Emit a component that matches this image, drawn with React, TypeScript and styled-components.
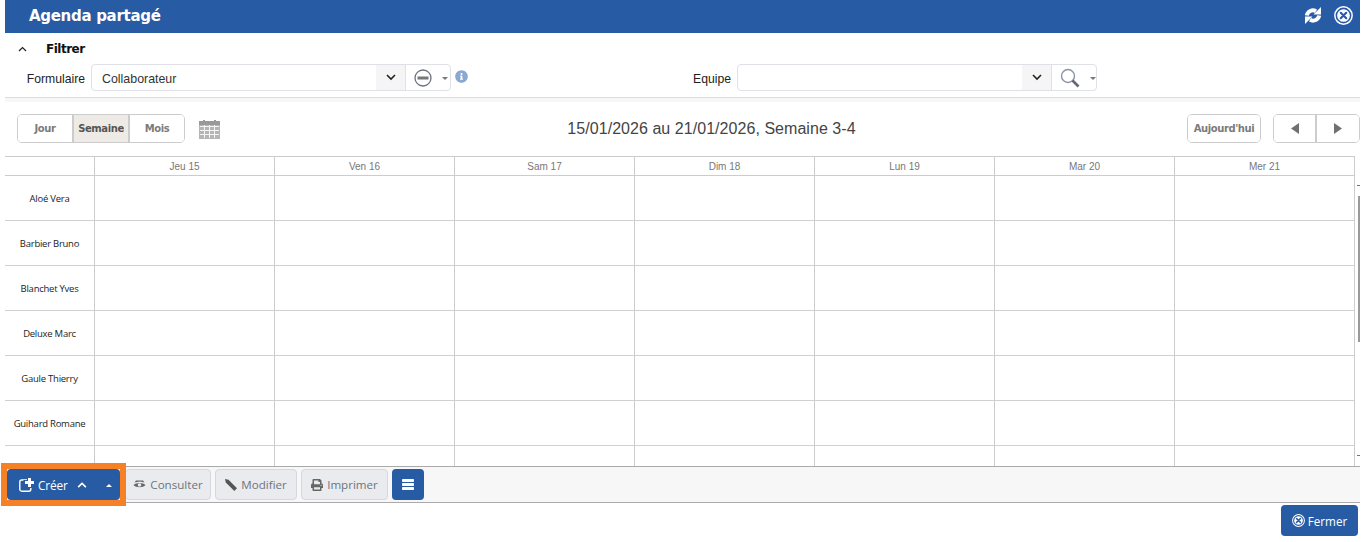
import * as React from 'react';
import styled, { createGlobalStyle } from 'styled-components';
import { FaChevronUp, FaInfoCircle, FaPrint } from 'react-icons/fa';

const GlobalStyle = createGlobalStyle`
  html, body {
    margin: 0;
    padding: 0;
    height: 542px;
    overflow: hidden;
    background: #fff;
  }
  body {
    font-family: 'Open Sans', 'Liberation Sans', sans-serif;
  }
`;

const Page = styled.div`
  width: 1355px;
  height: 542px;
  margin-left: 5px;
  display: flex;
  flex-direction: column;
`;

const TitleBar = styled.div`
  height: 33px;
  flex: none;
  background: #275ca5;
  color: #fff;
  display: flex;
  align-items: center;
  justify-content: space-between;
  padding: 0 7px 2px 24px;
  box-sizing: border-box;
`;

const Title = styled.div`
  font-family: 'DejaVu Sans', sans-serif;
  font-size: 15px;
  font-weight: 700;
  letter-spacing: -0.3px;
`;

const TitleIcons = styled.div`
  display: flex;
  align-items: center;
  gap: 12px;
`;

const FilterPanel = styled.div`
  height: 65px;
  flex: none;
  border-bottom: 1px solid #dcdcdc;
  box-sizing: border-box;
`;

const FilterHead = styled.div`
  height: 31px;
  display: flex;
  align-items: center;
  padding-left: 13px;
  font-family: 'DejaVu Sans', sans-serif;
  font-size: 12px;
  font-weight: 700;
  letter-spacing: -0.5px;
  color: #111;
`;

const FilterTitle = styled.span`
  margin-left: 19px;
`;

const FilterRow = styled.div`
  display: flex;
  align-items: center;
  height: 27px;
`;

const FieldLabel = styled.label<{ $width: number }>`
  width: ${(p) => p.$width}px;
  flex: none;
  text-align: right;
  padding: 2px 6px 0 0;
  box-sizing: border-box;
  font-family: 'Liberation Sans', sans-serif;
  font-size: 12.2px;
  color: #222;
`;

const Combo = styled.div<{ $width: number }>`
  width: ${(p) => p.$width}px;
  height: 27px;
  flex: none;
  display: flex;
  box-sizing: border-box;
  border: 1px solid #dfe1e6;
  border-radius: 4px;
  background: #fff;
`;

const ComboValue = styled.div`
  flex: 1;
  padding: 2px 0 0 10px;
  display: flex;
  align-items: center;
  font-family: 'Liberation Sans', sans-serif;
  font-size: 12.4px;
  color: #333;
`;

const ComboArrow = styled.div`
  width: 29px;
  flex: none;
  display: flex;
  align-items: center;
  justify-content: center;
  background: #f5f5f5;
  border-right: 1px solid #dfe1e6;
`;

const ComboAction = styled.div`
  width: 44px;
  flex: none;
  display: flex;
  align-items: center;
  padding-left: 8px;
  box-sizing: border-box;
  gap: 10px;
`;

const Caret = styled.span<{ $up?: boolean; $color?: string }>`
  display: inline-block;
  width: 0;
  height: 0;
  margin-top: 2px;
  border-left: 3px solid transparent;
  border-right: 3px solid transparent;
  ${(p) => (p.$up ? 'border-bottom' : 'border-top')}: 3px solid ${(p) => p.$color || '#777'};
`;

const InfoIcon = styled.span`
  display: flex;
  margin: -3px 0 0 4px;
  color: #8aa8d0;
  width: 213px;
`;

const Strip = styled.div`
  height: 4px;
  flex: none;
  background: #f7f7f7;
`;

const CalendarBar = styled.div`
  height: 54px;
  flex: none;
  display: flex;
  align-items: flex-start;
  padding: 12px 0 0 12px;
  box-sizing: border-box;
  position: relative;
`;

const ButtonGroup = styled.div`
  display: flex;
  height: 29px;
  border: 1px solid #ccc;
  border-radius: 5px;
  box-sizing: border-box;
  overflow: hidden;
`;

const ViewButton = styled.div<{ $active?: boolean; $width: number }>`
  width: ${(p) => p.$width}px;
  box-sizing: border-box;
  display: flex;
  align-items: center;
  justify-content: center;
  font-family: 'DejaVu Sans', sans-serif;
  font-size: 10px;
  font-weight: 700;
  letter-spacing: -0.4px;
  color: ${(p) => (p.$active ? '#555' : '#7b7b7b')};
  background: ${(p) => (p.$active ? '#eeebe6' : '#fff')};
  & + & {
    border-left: 2px solid #ccc;
  }
`;

const CalendarIcon = styled.div`
  margin: 6px 0 0 14px;
  display: flex;
`;

const DateRange = styled.div`
  position: absolute;
  left: 0;
  right: 0;
  top: 18px;
  padding-left: 58px;
  text-align: center;
  font-family: 'Liberation Sans', sans-serif;
  font-size: 16px;
  letter-spacing: 0.05px;
  color: #444;
`;

const NavArea = styled.div`
  margin-left: auto;
  display: flex;
  gap: 12px;
`;

const Grid = styled.div`
  height: 310px;
  flex: none;
  overflow: hidden;
  display: grid;
  grid-template-columns: 90px repeat(7, 180px) 5px;
  grid-template-rows: 20px repeat(7, 45px);
`;

const HeadCell = styled.div`
  border-top: 1px solid #ccc;
  border-bottom: 1px solid #ccc;
  border-right: 1px solid #ccc;
  box-sizing: border-box;
  display: flex;
  align-items: center;
  justify-content: center;
  font-family: 'Liberation Sans', sans-serif;
  font-size: 10px;
  color: #777;
`;

const NameCell = styled.div`
  border-bottom: 1px solid #d0d0d0;
  border-right: 1px solid #ccc;
  box-sizing: border-box;
  display: flex;
  align-items: center;
  justify-content: center;
  padding-top: 1px;
  font-family: 'Open Sans', sans-serif;
  font-size: 9.5px;
  letter-spacing: -0.25px;
  color: #1c1c1c;
`;

const DayCell = styled.div`
  border-bottom: 1px solid #d0d0d0;
  border-right: 1px solid #ccc;
  box-sizing: border-box;
`;

const ScrollTrack = styled.div`
  grid-column: 9;
  grid-row: 2 / span 7;
  position: relative;
`;

const ScrollThumb = styled.div`
  position: absolute;
  right: 0;
  top: 20px;
  width: 2px;
  height: 146px;
  background: #9a9a9a;
`;

const ScrollTick = styled.div<{ $top: number }>`
  position: absolute;
  right: 0;
  top: ${(p) => p.$top}px;
  width: 3px;
  height: 1px;
  background: #777;
`;

const Toolbar = styled.div`
  height: 37px;
  flex: none;
  background: #f7f7f7;
  border-top: 1px solid #aaa;
  border-bottom: 1px solid #aaa;
  box-sizing: border-box;
  display: flex;
  align-items: center;
  padding-left: 2px;
  gap: 4px;
`;

const CreateGroup = styled.div`
  width: 113px;
  height: 31px;
  flex: none;
  margin-right: 1px;
  border-radius: 4px;
  background: #275ca5;
  color: #fff;
  display: flex;
  align-items: center;
  padding-left: 12px;
  box-sizing: border-box;
  font-size: 11.8px;
  position: relative;
  &::after {
    content: '';
    position: absolute;
    inset: -6px;
    border: 6px solid #f58026;
  }
`;

const CreateLabel = styled.span`
  margin-left: 4px;
  letter-spacing: -0.1px;
`;

const CreateChevron = styled.span`
  display: flex;
  margin-left: 9px;
`;

const CreateCaret = styled.span`
  display: flex;
  margin-left: 19px;
`;

const ToolButton = styled.div<{ $width: number }>`
  width: ${(p) => p.$width}px;
  height: 31px;
  flex: none;
  box-sizing: border-box;
  border: 1px solid #d5d8dc;
  border-radius: 4px;
  background: #e9ebee;
  color: #6c757d;
  display: flex;
  align-items: center;
  justify-content: center;
  gap: 4px;
  font-size: 11.6px;
  & > svg {
    color: #666;
  }
`;

const MenuButton = styled.div`
  width: 32px;
  height: 31px;
  flex: none;
  border-radius: 4px;
  background: #275ca5;
  display: flex;
  align-items: center;
  justify-content: center;
`;

const Footer = styled.div`
  flex: 1;
  display: flex;
  justify-content: flex-end;
  align-items: flex-start;
  padding: 2px 2px 0 0;
`;

const CloseButton = styled.div`
  width: 77px;
  height: 31px;
  border-radius: 4px;
  background: #275ca5;
  color: #fff;
  display: flex;
  align-items: center;
  justify-content: center;
  gap: 3px;
  font-size: 11.7px;
`;

const CloseCircle = ({ size, color }: { size: number; color: string }) => (
  <svg width={size} height={size} viewBox="0 0 18 18">
    <circle cx="9" cy="9" r="8.200" fill="none" stroke="#fff" strokeWidth="1.400" />
    <circle cx="9" cy="9" r="6" fill="#fff" />
    <path d="M6.400 6.400l5.200 5.200M11.600 6.400l-5.200 5.200" stroke={color} strokeWidth="2" strokeLinecap="round" />
  </svg>
);

const Chevron = () => (
  <svg width="10" height="7" viewBox="0 0 10 7">
    <path d="M1 1l4 4 4-4" fill="none" stroke="#222" strokeWidth="1.600" />
  </svg>
);

const days = ['Jeu 15', 'Ven 16', 'Sam 17', 'Dim 18', 'Lun 19', 'Mar 20', 'Mer 21'];
const people = ['Aloé Vera', 'Barbier Bruno', 'Blanchet Yves', 'Deluxe Marc', 'Gaule Thierry', 'Guihard Romane', ''];

export default function App() {
  return (
    <Page>
      <GlobalStyle />
      <TitleBar>
        <Title>Agenda partagé</Title>
        <TitleIcons>
          <svg width="18" height="17" viewBox="0 0 18 17">
            <path d="M2.800 8.500A6.200 6.200 0 0 1 12 4.200" fill="none" stroke="#fff" strokeWidth="4" />
            <path d="M9.500 7.500h7.500V0z" fill="#fff" />
            <path d="M15.200 8.500A6.200 6.200 0 0 1 6 12.800" fill="none" stroke="#fff" strokeWidth="4" />
            <path d="M8.500 9.500H1V17z" fill="#fff" />
          </svg>
          <CloseCircle size={19} color="#275ca5" />
        </TitleIcons>
      </TitleBar>
      <FilterPanel>
        <FilterHead>
          <svg width="9" height="6" viewBox="0 0 9 6">
            <path d="M1 5l3.500-3.500L8 5" fill="none" stroke="#222" strokeWidth="1.200" />
          </svg>
          <FilterTitle>Filtrer</FilterTitle>
        </FilterHead>
        <FilterRow>
          <FieldLabel $width={86}>Formulaire</FieldLabel>
          <Combo $width={360}>
            <ComboValue>Collaborateur</ComboValue>
            <ComboArrow><Chevron /></ComboArrow>
            <ComboAction>
              <svg width="18" height="18" viewBox="0 0 18 18">
                <circle cx="9" cy="9" r="8" fill="#fff" stroke="#6a7280" strokeWidth="1.300" />
                <rect x="3.500" y="7.500" width="11" height="3" fill="#777" />
              </svg>
              <Caret />
            </ComboAction>
          </Combo>
          <InfoIcon><FaInfoCircle size={13} /></InfoIcon>
          <FieldLabel $width={69}>Equipe</FieldLabel>
          <Combo $width={360}>
            <ComboValue />
            <ComboArrow><Chevron /></ComboArrow>
            <ComboAction>
              <svg width="20" height="20" viewBox="0 0 20 20">
                <circle cx="8" cy="8" r="6.500" fill="#fff" stroke="#8a94a6" strokeWidth="1.400" />
                <path d="M12.500 12.500l6 6" stroke="#667" strokeWidth="2.600" />
              </svg>
              <Caret />
            </ComboAction>
          </Combo>
        </FilterRow>
      </FilterPanel>
      <Strip />
      <CalendarBar>
        <DateRange>15/01/2026 au 21/01/2026, Semaine 3-4</DateRange>
        <ButtonGroup>
          <ViewButton $width={54}>Jour</ViewButton>
          <ViewButton $width={56} $active>Semaine</ViewButton>
          <ViewButton $width={56}>Mois</ViewButton>
        </ButtonGroup>
        <CalendarIcon>
          <svg width="21" height="19" viewBox="0 0 21 19">
            <rect x="0" y="1" width="21" height="18" fill="#b5b5b5" />
            <rect x="0" y="1" width="21" height="4" fill="#999" />
            <rect x="4" y="0" width="2" height="3" fill="#999" />
            <rect x="15" y="0" width="2" height="3" fill="#999" />
            <path d="M1 6.500h19M1 10.500h19M1 14.500h19M5.500 5v13M10.500 5v13M15.500 5v13" stroke="#f4f4f4" strokeWidth="1" />
          </svg>
        </CalendarIcon>
        <NavArea>
          <ButtonGroup>
            <ViewButton $width={72}>Aujourd'hui</ViewButton>
          </ButtonGroup>
          <ButtonGroup>
            <ViewButton $width={41}>
              <svg width="10" height="11" viewBox="0 0 10 11"><path d="M9 0v11L1 5.500z" fill="#707070" /></svg>
            </ViewButton>
            <ViewButton $width={44}>
              <svg width="10" height="11" viewBox="0 0 10 11"><path d="M1 0v11l8-5.500z" fill="#707070" /></svg>
            </ViewButton>
          </ButtonGroup>
        </NavArea>
      </CalendarBar>
      <Grid>
        <HeadCell />
        {days.map((d) => <HeadCell key={d}>{d}</HeadCell>)}
        <div />
        {people.map((p, i) => (
          <React.Fragment key={i}>
            <NameCell>{p}</NameCell>
            {days.map((d) => <DayCell key={d} />)}
            {i === 0 && (
              <ScrollTrack>
                <ScrollTick $top={9} />
                <ScrollThumb />
                <ScrollTick $top={279} />
              </ScrollTrack>
            )}
          </React.Fragment>
        ))}
      </Grid>
      <Toolbar>
        <CreateGroup>
          <svg width="15" height="14" viewBox="0 0 15 14">
            <rect x="0.800" y="2" width="11" height="11.200" rx="2" fill="none" stroke="#fff" strokeWidth="1.400" />
            <path d="M10.500 -1v11M4.500 4.500h11" stroke="#275ca5" strokeWidth="5" />
            <path d="M10.500 0v9M6 4.500h9" stroke="#fff" strokeWidth="3" />
          </svg>
          <CreateLabel>Créer</CreateLabel>
          <CreateChevron><FaChevronUp size={10} /></CreateChevron>
          <CreateCaret><Caret $up $color="#fff" /></CreateCaret>
        </CreateGroup>
        <ToolButton $width={86}>
          <svg width="13" height="11" viewBox="0 0 13 11">
            <path d="M0.500 6C3 3.200 10 3.200 12.500 6 10 9 3 9 0.500 6z" fill="#666" />
            <circle cx="6.500" cy="6" r="1.800" fill="#e9ebee" />
            <path d="M1.500 3.500L3 1.500h7l1.500 2L7 2.400z" fill="#666" />
          </svg>
          Consulter
        </ToolButton>
        <ToolButton $width={82}>
          <svg width="12" height="12" viewBox="0 0 12 12">
            <path d="M0 0l3.500 0.800 8.500 8.500-2.700 2.700L0.800 3.500z" fill="#555" />
          </svg>
          Modifier
        </ToolButton>
        <ToolButton $width={87}><FaPrint size={12} />Imprimer</ToolButton>
        <MenuButton>
          <svg width="12" height="11" viewBox="0 0 12 11">
            <rect y="0" width="12" height="3" rx="0.800" fill="#fff" />
            <rect y="4" width="12" height="3" rx="0.800" fill="#fff" />
            <rect y="8" width="12" height="3" rx="0.800" fill="#fff" />
          </svg>
        </MenuButton>
      </Toolbar>
      <Footer>
        <CloseButton>
          <CloseCircle size={13} color="#275ca5" />
          Fermer
        </CloseButton>
      </Footer>
    </Page>
  );
}
